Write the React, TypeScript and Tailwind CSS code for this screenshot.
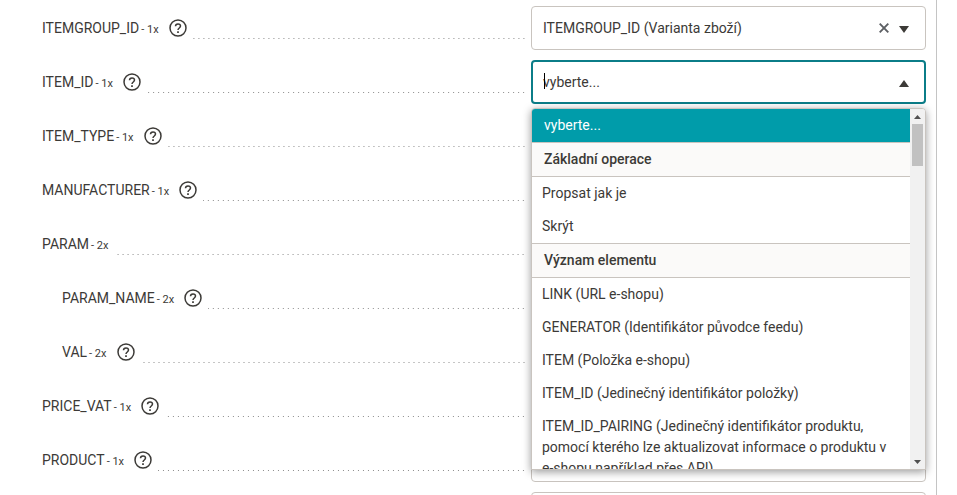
import { useState } from "react";

type Field = {
  name: string;
  count?: string;
  help?: boolean;
  nested?: boolean;
  value?: string;
};

const fields: Field[] = [
  { name: "ITEMGROUP_ID", count: "1x", help: true, value: "ITEMGROUP_ID (Varianta zboží)" },
  { name: "ITEM_ID", count: "1x", help: true },
  { name: "ITEM_TYPE", count: "1x", help: true },
  { name: "MANUFACTURER", count: "1x", help: true },
  { name: "PARAM", count: "2x" },
  { name: "PARAM_NAME", count: "2x", help: true, nested: true },
  { name: "VAL", count: "2x", help: true, nested: true },
  { name: "PRICE_VAT", count: "1x", help: true },
  { name: "PRODUCT", count: "1x", help: true },
];

const groups = [
  { label: "Základní operace", options: ["Propsat jak je", "Skrýt"] },
  {
    label: "Význam elementu",
    options: [
      "LINK (URL e-shopu)",
      "GENERATOR (Identifikátor původce feedu)",
      "ITEM (Položka e-shopu)",
      "ITEM_ID (Jedinečný identifikátor položky)",
      "ITEM_ID_PAIRING (Jedinečný identifikátor produktu, pomocí kterého lze aktualizovat informace o produktu v e-shopu například přes API)",
    ],
  },
];

function HelpIcon() {
  return (
    <svg width="18" height="18" viewBox="0 0 18 18" fill="none" stroke="currentColor" strokeWidth="1.5">
      <circle cx="9" cy="9" r="8" />
      <path d="M6.5 7.3c0-1.5 1.1-2.4 2.5-2.4s2.5.9 2.5 2.2c0 1.9-2.5 1.9-2.5 4" />
      <path d="M9 12.2v1.7" strokeWidth="1.7" />
    </svg>
  );
}

function Triangle({ up, small }: { up?: boolean; small?: boolean }) {
  return (
    <svg
      width={small ? 7 : 10}
      height={small ? 4 : 7}
      viewBox="0 0 10 7"
      preserveAspectRatio="none"
      fill="currentColor"
    >
      <path d={up ? "M5 0l5 7H0z" : "M0 0h10L5 7z"} />
    </svg>
  );
}

function Menu() {
  return (
    <div className="absolute inset-x-0 top-12 z-10 flex h-[362px] overflow-hidden rounded-t border border-[#c9c4bf] bg-white shadow-[0_2px_8px_rgba(0,0,0,0.4)]">
      <div role="listbox" aria-label="ITEM_ID" className="min-w-0 flex-1 overflow-hidden">
        <div role="option" aria-selected="true" className="bg-[#009caa] px-3 py-1.5 text-white">
          vyberte...
        </div>
        {groups.map((group) => (
          <div key={group.label} role="group" aria-label={group.label}>
            <div className="border-y border-[#c9c4bf] bg-[#fbfaf9] px-3 py-1.5 font-medium">
              {group.label}
            </div>
            {group.options.map((option) => (
              <div key={option} role="option" aria-selected="false" className="py-1.5 pr-3 pl-2.5">
                {option}
              </div>
            ))}
          </div>
        ))}
      </div>
      <div className="flex w-[15px] flex-col items-center bg-[#f1f1f1] text-[#505050]">
        <div className="flex h-[15px] items-center">
          <Triangle up small />
        </div>
        <div className="h-[42px] w-[11px] bg-[#c1c1c1]" />
        <div className="mt-auto flex h-[15px] items-center">
          <Triangle small />
        </div>
      </div>
    </div>
  );
}

function SearchField({ id }: { id: string }) {
  const [query, setQuery] = useState("");

  return (
    <div className="relative">
      <input
        id={id}
        type="text"
        value={query}
        onChange={(e) => setQuery(e.target.value)}
        placeholder="vyberte..."
        autoComplete="off"
        className="block h-11 w-full rounded border-2 border-[#0b7d88] bg-white pr-12 pl-2.5 outline-none placeholder:text-[#3c3a37]"
      />
      <span className="absolute top-[13px] left-[13px] h-4 w-px bg-black" />
      <span className="absolute inset-y-0 right-[17px] flex items-center pt-0.5">
        <Triangle up />
      </span>
      <Menu />
    </div>
  );
}

function SelectField({ id, value, label }: { id: string; value?: string; label?: string }) {
  const [selected, setSelected] = useState(value ?? "");

  return (
    <div className="relative">
      <select
        id={id}
        aria-label={label}
        value={selected}
        onChange={(e) => setSelected(e.target.value)}
        className="block h-11 w-full appearance-none rounded border border-[#c9c4bf] bg-white pr-16 pl-[11px]"
      >
        <option value="">{value ? "vyberte..." : ""}</option>
        {value && <option value={value}>{value}</option>}
      </select>
      {selected && (
        <button
          type="button"
          aria-label="Zrušit výběr"
          onClick={() => setSelected("")}
          className="absolute inset-y-0 right-[37px] flex items-center text-[#5c5f63]"
        >
          <svg width="10" height="10" viewBox="0 0 10 10" stroke="currentColor" strokeWidth="1.9">
            <path d="M.7.7l8.6 8.6M9.3.7L.7 9.3" />
          </svg>
        </button>
      )}
      <span className="pointer-events-none absolute inset-y-0 right-[17px] flex items-center pt-0.5">
        <Triangle />
      </span>
    </div>
  );
}

function Row({ field }: { field: Field }) {
  const id = field.name.toLowerCase();

  return (
    <div className="grid grid-cols-[minmax(0,1fr)_395px] gap-x-1.5">
      <div className={field.nested ? "flex h-11 pl-5" : "flex h-11"}>
        <label htmlFor={id} className="flex items-baseline gap-0.5 pt-3">
          {field.name}
          <span className="text-[11px]">- {field.count}</span>
        </label>
        {field.help && (
          <button type="button" aria-label={`Nápověda ${field.name}`} className="ml-2.5 flex items-center">
            <HelpIcon />
          </button>
        )}
        <div className="ml-1.5 h-[33px] flex-1 bg-[linear-gradient(to_left,transparent_1px,#8c8c8c_1px,#8c8c8c_2px,transparent_2px)] bg-[length:5px_1px] bg-[position:right_bottom] bg-repeat-x" />
      </div>
      {field.name === "ITEM_ID" ? <SearchField id={id} /> : <SelectField id={id} value={field.value} />}
    </div>
  );
}

export default function App() {
  return (
    <main className="h-screen overflow-hidden bg-white pr-5 font-['Roboto',sans-serif] text-sm leading-[21px] text-[#3c3a37]">
      <form className="flex min-h-full flex-col gap-2.5 border-r border-[#c4c4c4] pt-1.5 pr-2.5 pl-[42px]">
        {fields.map((field) => (
          <Row key={field.name} field={field} />
        ))}
        <div className="ml-auto w-[395px]">
          <SelectField id="productname" label="PRODUCTNAME" />
        </div>
      </form>
    </main>
  );
}
